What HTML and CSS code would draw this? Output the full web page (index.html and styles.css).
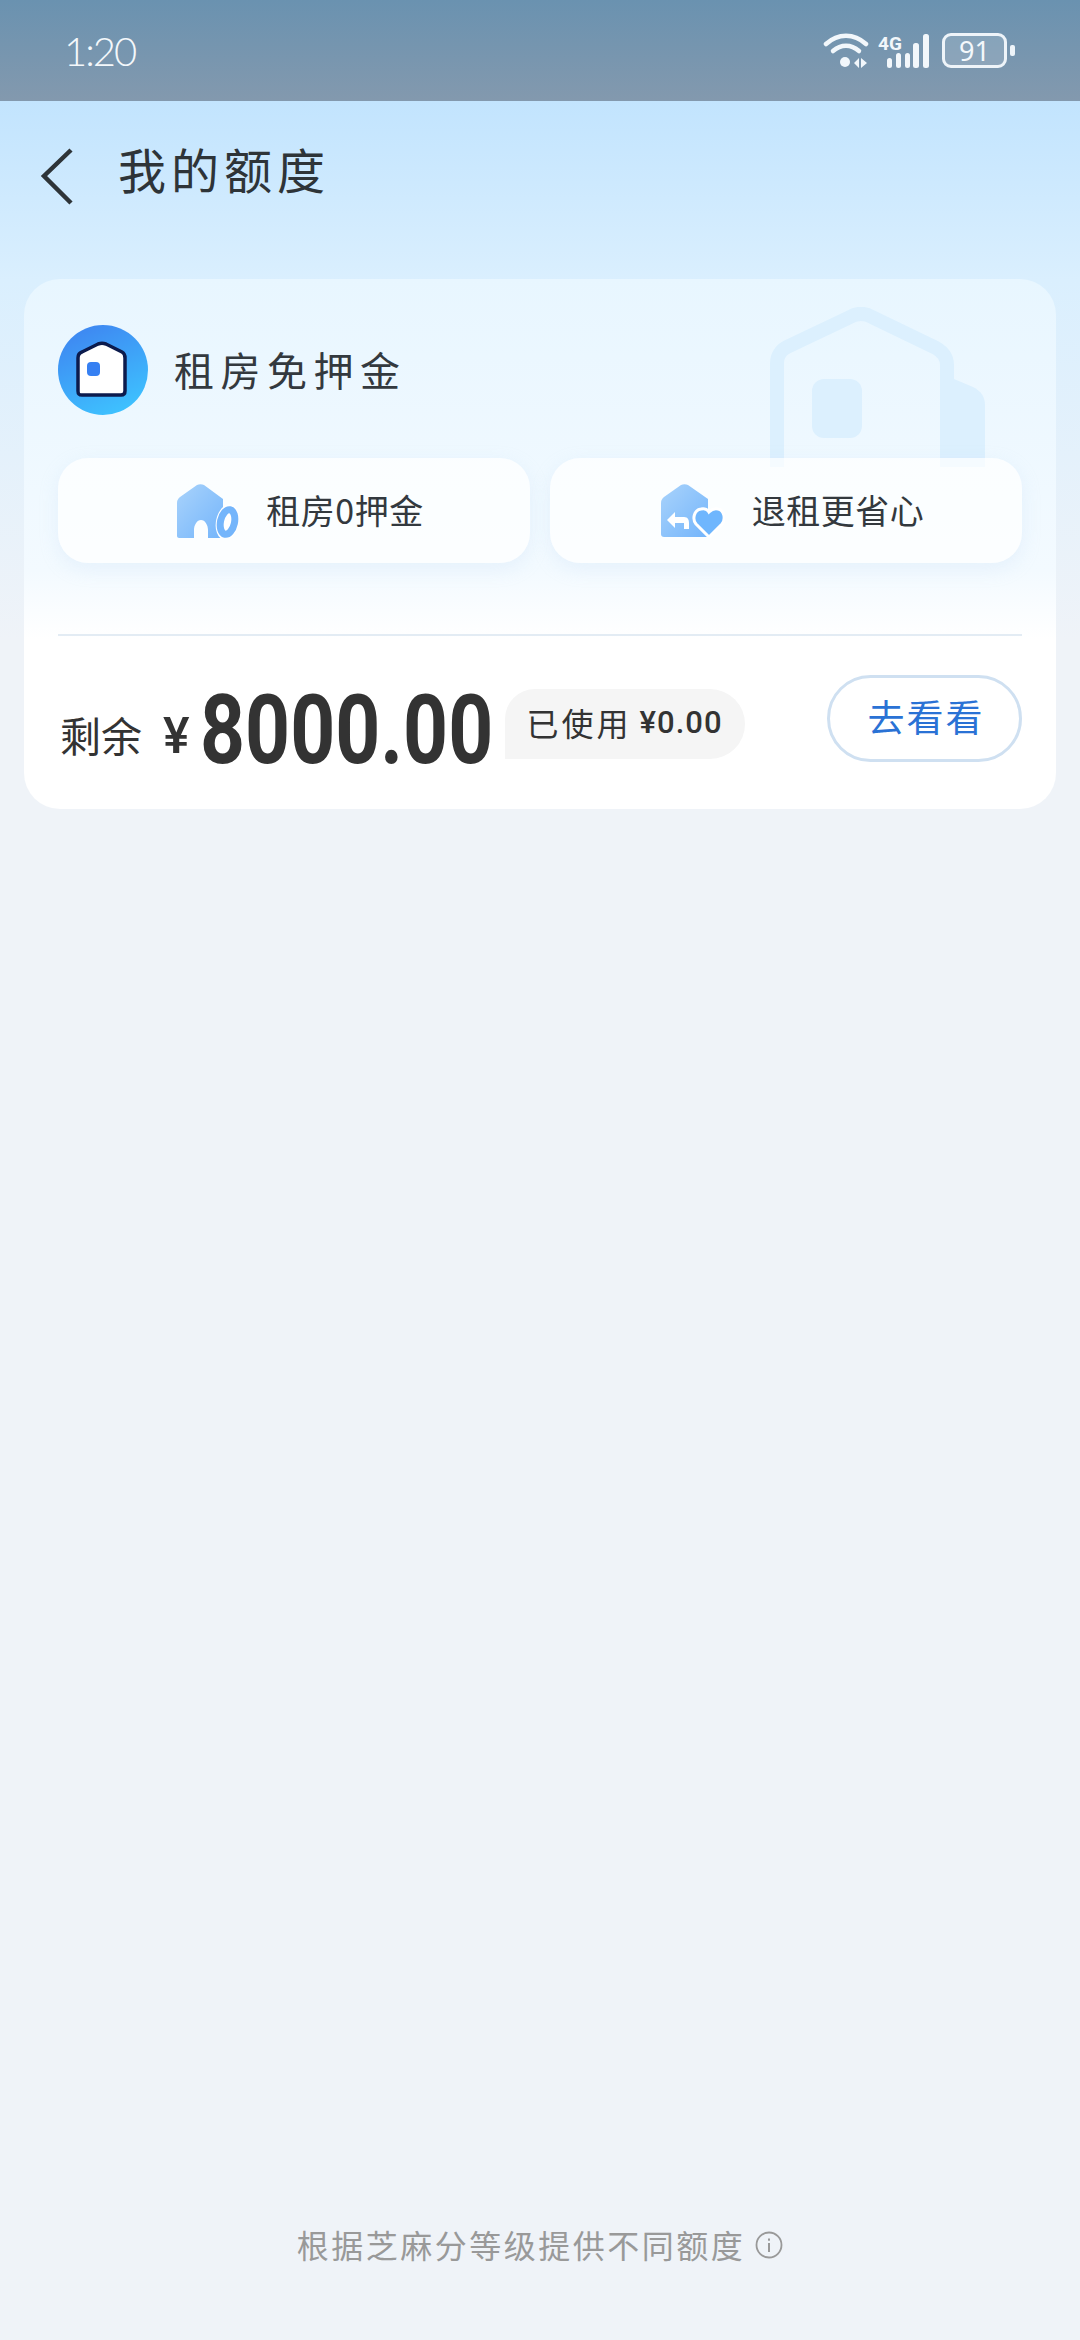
FILE: index.html
```html
<!DOCTYPE html>
<html lang="zh-CN">
<head>
    <meta charset="UTF-8">
    <meta name="viewport" content="width=device-width, initial-scale=1.0">
    <title>我的额度</title>
    <link rel="stylesheet" href="styles.css">
</head>
<body>
    <div id="page">
        <div class="status-bar">
            <span class="status-time">1:20</span>
            <div class="status-icons">
                <svg class="icon-wifi" width="46" height="36" viewBox="0 0 46 36">
                    <path d="M3 11C15 0 31 0 43 11" fill="none" stroke="#f2f7fb" stroke-width="4.5" stroke-linecap="round"/>
                    <path d="M10 18C18 11 28 11 36 18" fill="none" stroke="#f2f7fb" stroke-width="4.5" stroke-linecap="round"/>
                    <circle cx="22" cy="29" r="5" fill="#f2f7fb"/>
                    <path d="M31 30L36 25V35ZM38 25L44 30L38 35Z" fill="#f2f7fb"/>
                </svg>
                <svg class="icon-signal" width="52" height="36" viewBox="0 0 52 36">
                    <text x="0" y="17" class="signal-label">4G</text>
                    <rect x="9" y="25" width="5" height="10" rx="2.5" fill="#f2f7fb"/>
                    <rect x="18" y="20" width="5" height="15" rx="2.5" fill="#f2f7fb"/>
                    <rect x="27" y="20" width="5" height="15" rx="2.5" fill="#f2f7fb"/>
                    <rect x="35" y="10" width="6" height="25" rx="2.5" fill="#f2f7fb"/>
                    <rect x="45" y="1" width="6" height="34" rx="2.5" fill="#f2f7fb"/>
                </svg>
                <div class="battery"><span>91</span></div>
                <div class="battery-nub"></div>
            </div>
        </div>

        <div class="nav-bar">
            <svg class="icon-back" width="34" height="58" viewBox="0 0 34 58">
                <path d="M31 2L4 28L31 55" fill="none" stroke="#2e3438" stroke-width="4.5"/>
            </svg>
            <h1 class="nav-title">我的额度</h1>
        </div>

        <div class="card">
            <svg class="card-watermark" width="220" height="160" viewBox="0 0 220 160">
                <path d="M7 160V56C7 49 11 43 17 40L80 10C87 6 95 6 102 10L166 41C173 45 177 50 177 58V160" fill="none" stroke="#dcf0fe" stroke-width="14"/>
                <path d="M184 72L203 80C211 84 215 90 215 98V160H184Z" fill="#dcf0fe"/>
                <rect x="42" y="72" width="50" height="59" rx="12" fill="#dcf0fe"/>
            </svg>

            <div class="card-head">
                <svg class="card-logo" width="90" height="90" viewBox="0 0 90 90">
                    <defs>
                        <linearGradient id="logo-bg" x1="0.25" y1="0" x2="0.7" y2="1">
                            <stop offset="0" stop-color="#3e86f1"/>
                            <stop offset="1" stop-color="#3ec3ff"/>
                        </linearGradient>
                    </defs>
                    <circle cx="45" cy="45" r="45" fill="url(#logo-bg)"/>
                    <path d="M20 33C20 30 21 28 24 27L40 19C43 18 45 18 48 19L64 27C66 28 67 30 67 33V66C67 69 65 70 63 70H24C21 70 20 69 20 66Z" fill="#fff" stroke="#0c1b4d" stroke-width="3.5"/>
                    <rect x="29" y="37" width="13" height="14" rx="4" fill="#3680f2"/>
                </svg>
                <h2 class="card-title">租房免押金</h2>
            </div>

            <div class="feature-row">
                <div class="feature">
                    <svg width="62" height="54" viewBox="0 0 62 54">
                        <defs>
                            <linearGradient id="house-a" x1="0" y1="0" x2="1" y2="1">
                                <stop offset="0" stop-color="#a9d3fb"/>
                                <stop offset="1" stop-color="#74b5fb"/>
                            </linearGradient>
                        </defs>
                        <path d="M0 19C0 16 1 15 3 13L20 1C22 0 25 0 27 1L46 15V54H31V46C31 41 28 36 24 36C20 36 17 41 17 46V54H2C1 54 0 53 0 52Z" fill="url(#house-a)"/>
                        <ellipse cx="50.5" cy="38" rx="11.5" ry="18" transform="rotate(12 50.5 38)" fill="#fff"/>
                        <ellipse cx="50.5" cy="38" rx="7" ry="12.5" transform="rotate(12 50.5 38)" fill="none" stroke="#74b5fb" stroke-width="7"/>
                    </svg>
                    <span>租房0押金</span>
                </div>
                <div class="feature">
                    <svg width="64" height="54" viewBox="0 0 64 54">
                        <defs>
                            <linearGradient id="house-b" x1="0" y1="0" x2="1" y2="1">
                                <stop offset="0" stop-color="#a9d3fb"/>
                                <stop offset="1" stop-color="#74b5fb"/>
                            </linearGradient>
                        </defs>
                        <path d="M0 19C0 16 1 15 3 13L20 1C22 0 25 0 27 1L47 15V53H3C1 53 0 52 0 50Z" fill="url(#house-b)"/>
                        <path d="M6 36L14 28V33H23C27 33 28 36 28 39V45H23V39H14V44Z" fill="#fff"/>
                        <path d="M48 53L35 40C31 35 33 26 40 25C44 24 47 26 48 28C50 26 53 24 57 25C63 26 65 35 61 40Z" fill="#6fb6fd" stroke="#fff" stroke-width="3"/>
                    </svg>
                    <span>退租更省心</span>
                </div>
            </div>

            <div class="divider"></div>

            <div class="balance-row">
                <span class="balance-label">剩余</span>
                <span class="balance-currency">¥</span>
                <span class="balance-amount"><span class="amount-digits">8000.00</span></span>
                <div class="used-badge">已使用 <b>¥0.00</b></div>
                <button class="go-button" type="button"><span>去看看</span></button>
            </div>
        </div>

        <div class="footer-note">
            <span>根据芝麻分等级提供不同额度</span>
            <svg width="28" height="28" viewBox="0 0 28 28">
                <circle cx="14" cy="14" r="12.5" fill="none" stroke="#999" stroke-width="1.8"/>
                <rect x="13" y="12" width="2" height="9" fill="#999"/>
                <rect x="13" y="7.5" width="2" height="2.2" fill="#999"/>
            </svg>
        </div>
    </div>
</body>
</html>
```

FILE: styles.css
```css
* {
    box-sizing: border-box;
}
html, body {
    margin: 0;
    padding: 0;
}
body {
    font-family: "Noto Sans CJK SC", "Noto Sans", sans-serif;
    color: #333;
}
#page {
    width: 1080px;
    height: 2340px;
    display: flex;
    flex-direction: column;
    background: linear-gradient(180deg, #c2e4fe 101px, #daeffe 280px, #eff3f8 640px);
}
.status-bar {
    height: 101px;
    flex-shrink: 0;
    display: flex;
    align-items: center;
    justify-content: space-between;
    padding: 0 65px 0 64px;
    background: linear-gradient(180deg, #6a92b0, #8399ae);
}
.status-time {
    font-family: Lato, sans-serif;
    font-weight: 300;
    font-size: 40px;
    letter-spacing: -2px;
    color: #f4f8fb;
}
.status-icons {
    display: flex;
    align-items: center;
}
.icon-wifi {
    margin-right: 9px;
}
.icon-signal {
    margin-right: 12px;
}
.signal-label {
    font-family: "Roboto", sans-serif;
    font-weight: 700;
    font-size: 19px;
    fill: #f2f7fb;
}
.battery {
    width: 65px;
    height: 35px;
    border: 3px solid #eef4f9;
    border-radius: 9px;
    background: rgba(255, 255, 255, 0.14);
    display: flex;
    align-items: center;
    justify-content: center;
    font-family: "Noto Sans", sans-serif;
    font-size: 27px;
    color: #f4f8fb;
}
.battery-nub {
    width: 5px;
    height: 11px;
    margin-left: 3px;
    border-radius: 2px;
    background: #eef4f9;
}
.nav-bar {
    height: 178px;
    flex-shrink: 0;
    display: flex;
    align-items: flex-start;
    padding: 47px 0 0 40px;
}
.nav-title {
    margin: -13px 0 0 44px;
    font-size: 48px;
    line-height: 66px;
    font-weight: 400;
    letter-spacing: 5px;
    color: #2e3438;
}
.card {
    position: relative;
    height: 530px;
    margin: 0 24px;
    padding: 0 34px;
    border-radius: 36px;
    overflow: hidden;
    background: linear-gradient(180deg, #e8f6ff 0%, #f3faff 55%, #fff 68%);
}
.card-watermark {
    position: absolute;
    top: 28px;
    left: 746px;
}
.card-head {
    position: relative;
    display: flex;
    align-items: center;
    height: 90px;
    margin-top: 46px;
}
.card-title {
    margin: -2px 0 0 26px;
    font-size: 40px;
    font-weight: 400;
    letter-spacing: 6.5px;
    color: #33393e;
}
.feature-row {
    position: relative;
    display: flex;
    gap: 20px;
    margin-top: 43px;
}
.feature {
    flex: 1;
    height: 105px;
    padding-left: 13px;
    display: flex;
    align-items: center;
    justify-content: center;
    gap: 27px;
    border-radius: 30px;
    font-size: 34px;
    letter-spacing: 0.5px;
    color: #33393e;
    background: rgba(255, 255, 255, 0.72);
    box-shadow: 0 6px 18px rgba(190, 220, 245, 0.25);
}
.feature span {
    margin-top: -3px;
}
.divider {
    height: 2px;
    margin-top: 71px;
    background: #e3ecf4;
}
.balance-row {
    position: relative;
    height: 174px;
    display: flex;
    align-items: flex-start;
}
.balance-label {
    margin: 70px 0 0 2px;
    font-size: 41px;
    line-height: 56px;
    color: #333;
}
.balance-currency {
    margin: 72px 0 0 21px;
    font-family: "Roboto", sans-serif;
    font-weight: 500;
    font-size: 50px;
    line-height: 56px;
    color: #333;
}
.balance-amount {
    width: 290px;
    margin: 39px 0 0 10px;
    font-family: "Roboto", sans-serif;
    font-weight: 700;
    font-size: 97px;
    line-height: 110px;
    color: #333;
}
.amount-digits {
    display: inline-block;
    transform: scaleX(0.81);
    transform-origin: left center;
}
.used-badge {
    width: 240px;
    height: 70px;
    margin: 53px 0 0 15px;
    padding-bottom: 4px;
    display: flex;
    align-items: center;
    justify-content: center;
    gap: 8px;
    border-radius: 30px 35px 35px 0;
    background: #f5f5f5;
    font-size: 32px;
    letter-spacing: 3px;
    color: #333;
}
.used-badge b {
    font-family: "Roboto", sans-serif;
    font-weight: 500;
    font-size: 31px;
    letter-spacing: 1px;
}
.go-button {
    width: 195px;
    height: 87px;
    margin: 39px 0 0 auto;
    padding: 0 0 5px 3px;
    border: 3px solid #cfe0f1;
    border-radius: 44px;
    background: #fff;
    font-family: inherit;
    font-size: 37px;
    letter-spacing: 2px;
    color: #2a72d5;
}
.footer-note {
    display: flex;
    align-items: center;
    justify-content: center;
    gap: 10px;
    margin-top: auto;
    margin-bottom: 74px;
    font-size: 32px;
    line-height: 44px;
    letter-spacing: 2.5px;
    color: #999;
}
.footer-note span {
    margin-top: -2px;
}
```
